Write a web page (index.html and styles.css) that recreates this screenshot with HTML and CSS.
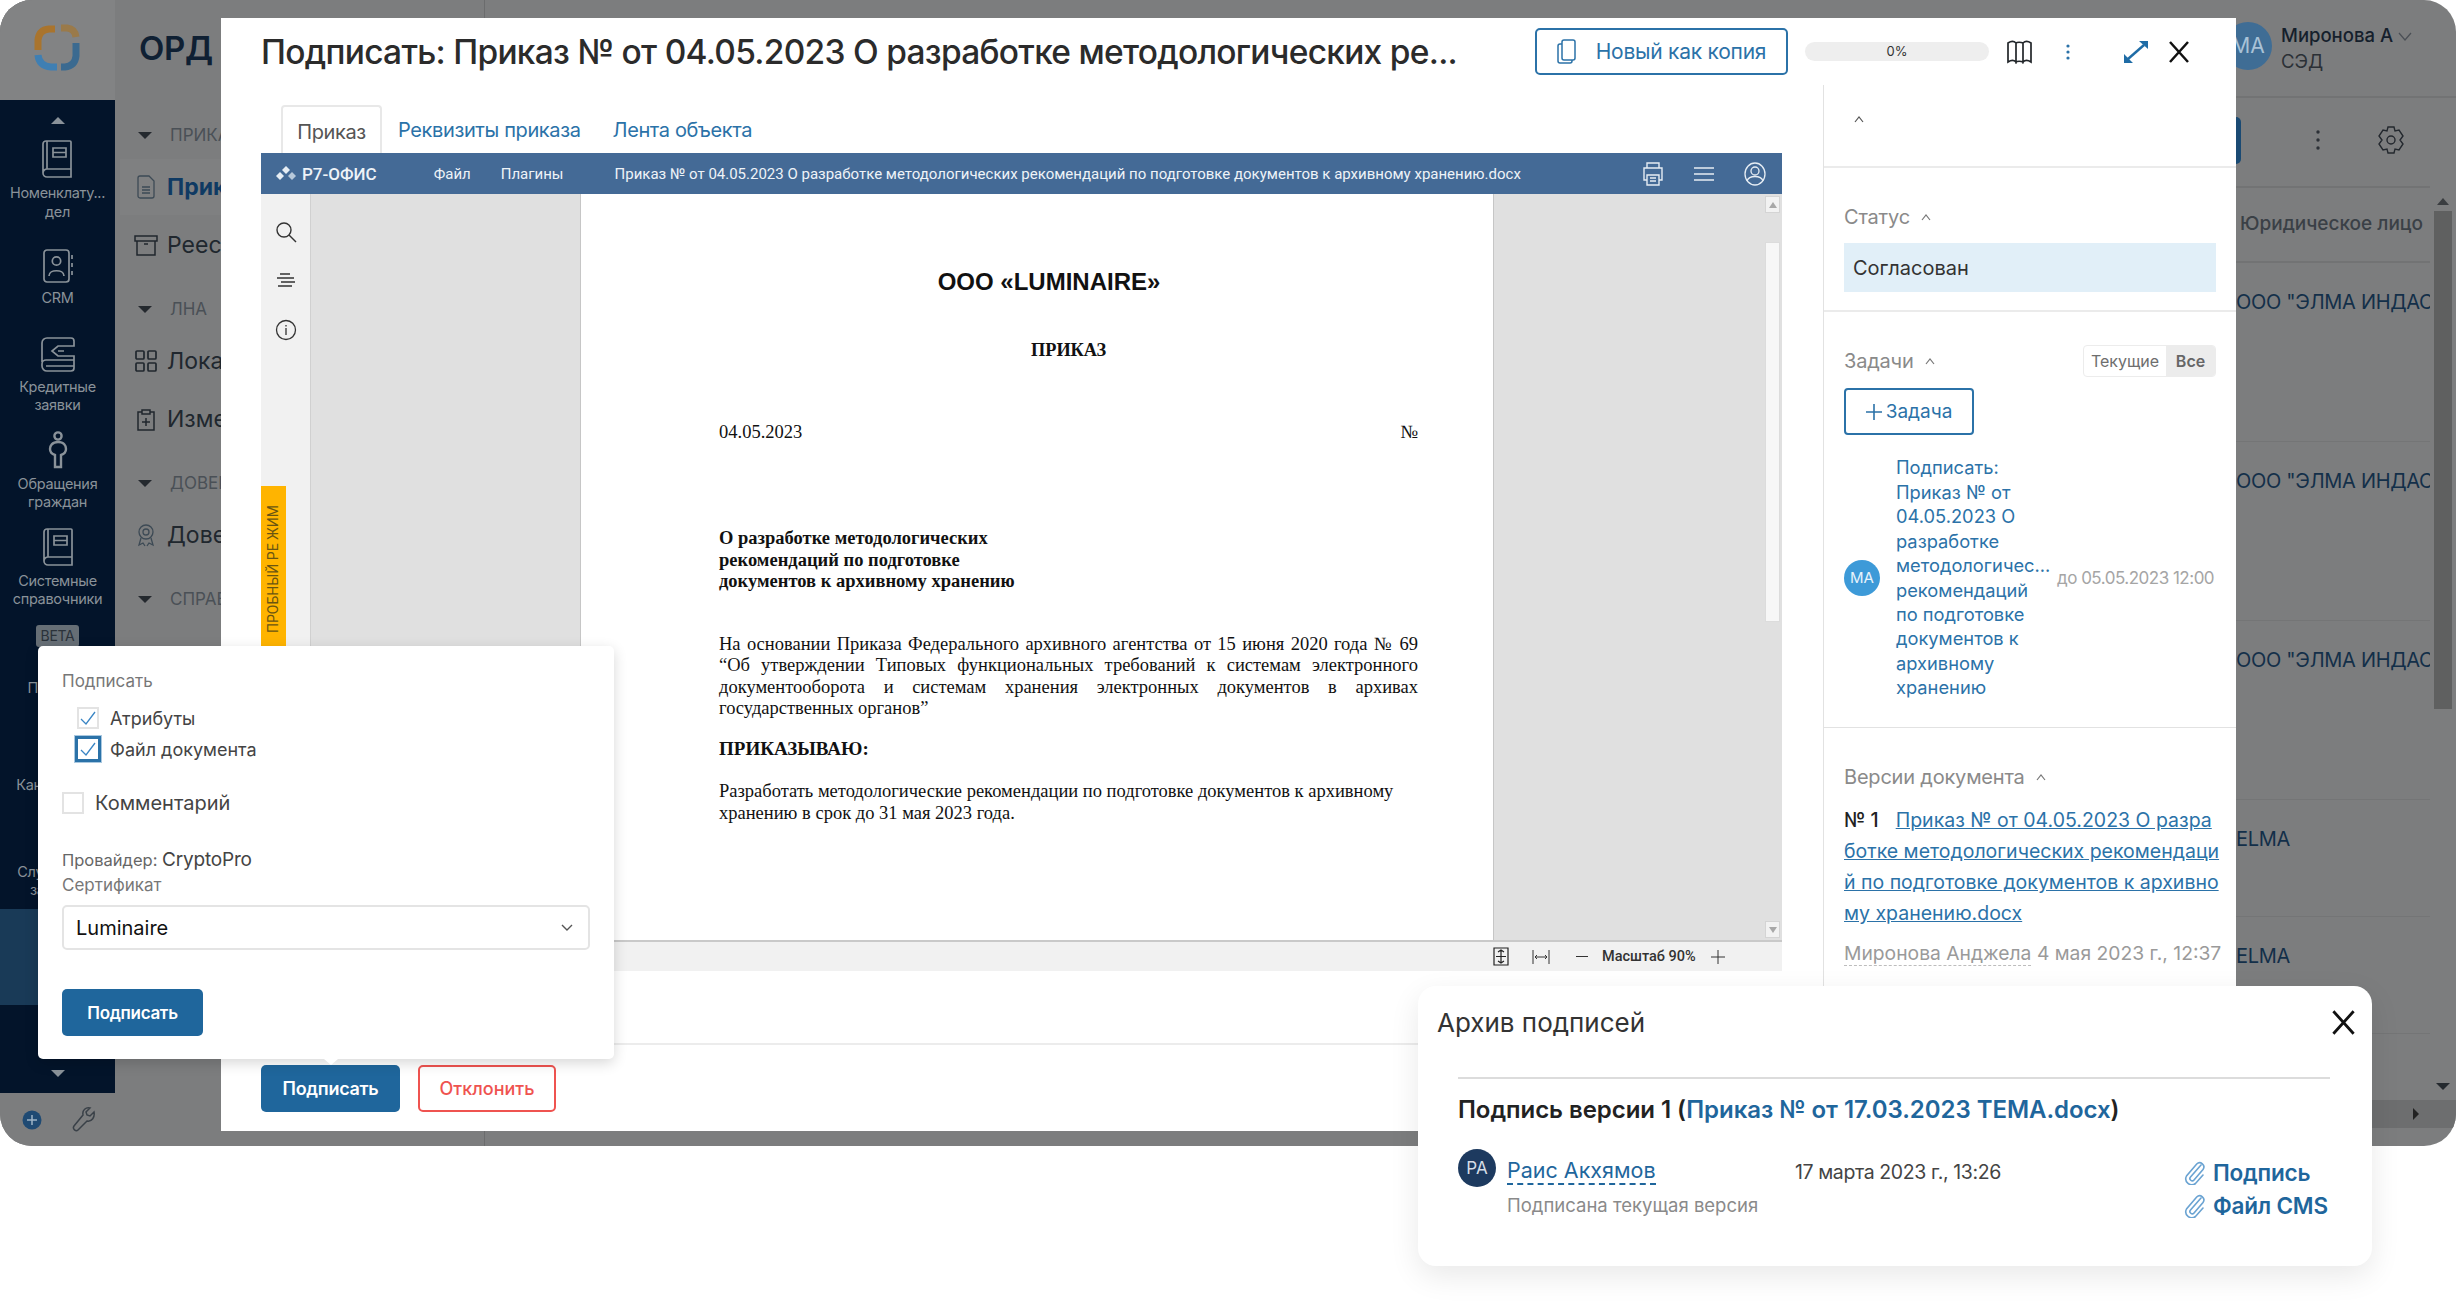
FILE: index.html
```html
<!DOCTYPE html>
<html lang="ru">
<head>
<meta charset="utf-8">
<title>Подписать</title>
<link rel="stylesheet" href="styles.css">
</head>
<body>
<svg class="defs" width="0" height="0">
  <symbol id="book" viewBox="0 0 34 38"><path d="M3 33V4a3 3 0 0 1 3-3h24a1 1 0 0 1 1 1v27H7a4 4 0 0 0-4 4 4 4 0 0 0 4 4h24v-8M7 1v28M13 8h13v9H13zM13 12.500h13" fill="none" stroke="currentColor" stroke-width="1.700"/></symbol>
  <symbol id="clip" viewBox="0 0 22 25"><path d="M18 5 7.500 17a2.300 2.300 0 0 0 3.500 3L20 9.500a4.200 4.200 0 0 0-6.300-5.500L3.500 16a6 6 0 0 0 9 7.500L20 15" fill="none" stroke="#6aa3d2" stroke-width="1.600" stroke-linecap="round"/></symbol>
</svg>
<div class="stage">
  <div class="app">
    <aside class="sidebar">
      <div class="logo-area">
        <svg width="48" height="48" viewBox="0 0 48 48" fill="none" stroke-width="7"><path d="M5 26V16Q6 6 16 5h6" stroke="#a9742d"/><path d="M28 4h6q8 1 9 9" stroke="#9a7a4a"/><path d="M5 31q1 11 13 12h6" stroke="#3f7fb3"/><path d="M43 19v13q-1 10-11 11h-4" stroke="#3b6a90"/></svg>
      </div>
      <nav class="rail">
        <span class="tri tri-up"></span>
        <div class="rail-item rail-first"><svg width="34" height="38"><use href="#book"/></svg><span>Номенклату...<br>дел</span></div>
        <div class="rail-item rail-wide"><svg width="32" height="34" viewBox="0 0 32 34" fill="none" stroke="currentColor" stroke-width="1.700"><rect x="2" y="1" width="25" height="32" rx="3"/><circle cx="14.500" cy="12" r="4.200"/><path d="M7 27c0-7 15-7 15 0M30 6v4M30 14v4M30 22v4"/></svg><span>CRM</span></div>
        <div class="rail-item rail-wide"><svg width="36" height="36" viewBox="0 0 36 36" fill="none" stroke="currentColor" stroke-width="1.700"><path d="M2 26V7a5 5 0 0 1 5-5h24a3 3 0 0 1 3 3v5H18l-6 5 6 5h16v12a3 3 0 0 1-3 3H7a5 5 0 0 1-5-5v-2a4 4 0 0 1 4-4h28M6 30h28M18 15h6"/></svg><span>Кредитные<br>заявки</span></div>
        <div class="rail-item"><svg width="22" height="38" viewBox="0 0 22 38" fill="none" stroke="currentColor" stroke-width="2.400"><circle cx="11" cy="5" r="3.600"/><path d="M11 11c-6 0-8 4-8 7 0 3 2 5 5 6v12h6V24c3-1 5-3 5-6 0-3-2-7-8-7z"/></svg><span>Обращения<br>граждан</span></div>
        <div class="rail-item"><svg width="34" height="38"><use href="#book"/></svg><span>Системные<br>справочники</span></div>
        <span class="beta">BETA</span>
        <span class="rail-label rail-l1">Приказы</span>
        <span class="rail-label rail-l2">Канцелярия</span>
        <span class="rail-label rail-l3">Служебные<br>записки</span>
        <div class="rail-active"></div>
        <span class="tri tri-down"></span>
      </nav>
      <div class="tools">
        <svg width="20" height="20" viewBox="0 0 20 20"><circle cx="10" cy="10" r="9.500" fill="#1f4a73"/><path d="M10 5v10M5 10h10" stroke="#9fb4c6" stroke-width="1.500"/></svg>
        <svg width="24" height="26" viewBox="0 0 24 26" fill="none" stroke="#3a4148" stroke-width="1.500"><path d="M22 5l-4 4-3-1-1-3 4-4c-4-1-8 2-7 7L2 19c-2 3 2 6 4 4l9-9c5 1 8-4 7-9z"/></svg>
      </div>
    </aside>

    <section class="subnav">
      <h1 class="subnav-title">ОРД &amp; ЛНА</h1>
      <div class="nav-head"><span class="tri tri-dark"></span>ПРИКАЗЫ</div>
      <div class="nav-item nav-active"><svg width="20" height="24" viewBox="0 0 20 24" fill="none" stroke="#3d4a55" stroke-width="1.300"><path d="M2 3a2 2 0 0 1 2-2h9l5 5v15a2 2 0 0 1-2 2H4a2 2 0 0 1-2-2zM6 12h8M6 15h8M6 18h8"/></svg>Приказы</div>
      <div class="nav-item"><svg width="24" height="22" viewBox="0 0 24 22" fill="none" stroke="#20272e" stroke-width="1.500"><path d="M1 2h22v5H1zM3 7v14h18V7M10 10h4"/></svg>Реестр</div>
      <div class="nav-head"><span class="tri tri-dark"></span>ЛНА</div>
      <div class="nav-item"><svg width="22" height="22" viewBox="0 0 22 22" fill="none" stroke="#20272e" stroke-width="1.700"><rect x="1" y="1" width="8" height="8" rx="1"/><rect x="13" y="1" width="8" height="8" rx="1"/><rect x="1" y="13" width="8" height="8" rx="1"/><rect x="13" y="13" width="8" height="8" rx="1"/></svg>Локальные</div>
      <div class="nav-item"><svg width="20" height="24" viewBox="0 0 20 24" fill="none" stroke="#20272e" stroke-width="1.500"><path d="M6 5H2v18h16V5h-4M6 3h8v4H6zM10 11v8M6 15h8"/></svg>Изменения</div>
      <div class="nav-head"><span class="tri tri-dark"></span>ДОВЕРЕННОСТИ</div>
      <div class="nav-item"><svg width="20" height="24" viewBox="0 0 20 24" fill="none" stroke="#3d4a55" stroke-width="1.300"><circle cx="10" cy="9" r="7"/><circle cx="10" cy="9" r="3"/><path d="M5 15l-2 7 4-2 2 3M15 15l2 7-4-2-2 3"/></svg>Доверенности</div>
      <div class="nav-head"><span class="tri tri-dark"></span>СПРАВОЧНИКИ</div>
    </section>

    <main class="main">
      <header class="main-top">
        <div class="avatar-big">МА</div>
        <div class="user"><div class="user-name">Миронова А <svg width="14" height="10" viewBox="0 0 14 10" fill="none" stroke="#4a4f55" stroke-width="1.200"><path d="M1 1l6 7 6-7"/></svg></div><div class="user-role">СЭД</div></div>
      </header>
      <div class="toolbar">
        <span class="main-btn"></span>
        <svg class="tb-dots" width="4" height="22" viewBox="0 0 4 22" fill="#2b3036"><circle cx="2" cy="3" r="1.700"/><circle cx="2" cy="11" r="1.700"/><circle cx="2" cy="19" r="1.700"/></svg>
        <svg width="26" height="28" viewBox="0 0 26 28" fill="none" stroke="#23282e" stroke-width="1.400"><path d="M10 1h6l1 4 4-1 4 6-3 4 3 4-4 6-4-1-1 4h-6l-1-4-4 1-4-6 3-4-3-4 4-6 4 1z"/><circle cx="13" cy="14" r="4"/></svg>
      </div>
      <div class="table-wrap">
        <div class="table">
          <div class="row row-head">Юридическое лицо</div>
          <div class="row row-tall">ООО "ЭЛМА ИНДАСТРИ"</div>
          <div class="row row-tall">ООО "ЭЛМА ИНДАСТРИ"</div>
          <div class="row row-tall">ООО "ЭЛМА ИНДАСТРИ"</div>
          <div class="row row-short">ELMA</div>
          <div class="row row-short">ELMA</div>
        </div>
        <div class="vscroll"><span class="tri tri-up tri-dark-up"></span><div class="vthumb"></div><span class="tri tri-dark"></span></div>
      </div>
      <div class="hscroll"><span class="tri-right"></span></div>
    </main>

    <div class="modal">
      <header class="modal-head">
        <h2 class="modal-title">Подписать: Приказ № от 04.05.2023 О разработке методологических ре...</h2>
        <button class="btn-copy"><svg width="23" height="27" viewBox="0 0 23 27" fill="none" stroke="#2b72a8" stroke-width="1.500"><path d="M7 2h9a2 2 0 0 1 2 2v16a2 2 0 0 1-2 2H7a2 2 0 0 1-2-2V4a2 2 0 0 1 2-2z"/><path d="M5 6H3a2 2 0 0 0-2 2v15a2 2 0 0 0 2 2h10a2 2 0 0 0 2-2v-1"/></svg>Новый как копия</button>
        <div class="progress">0%</div>
        <svg class="ico-map" width="27" height="24" viewBox="0 0 27 24" fill="none" stroke="#22262a" stroke-width="1.700"><path d="M2 3c3-2 6-2 8 0v19c-2-2-5-2-8 0zM10 3c1-1 5-1 7 0v19c-2-1-6-1-7 0zM17 3c2-2 5-2 8 0v19c-3-2-6-2-8 0z"/></svg>
        <svg class="ico-dots" width="4" height="16" viewBox="0 0 4 16" fill="#2b72a8"><circle cx="2" cy="2" r="1.600"/><circle cx="2" cy="8" r="1.600"/><circle cx="2" cy="14" r="1.600"/></svg>
        <svg class="ico-exp" width="26" height="24" viewBox="0 0 26 24" fill="none" stroke="#1f6ca6" stroke-width="2.400"><path d="M5 19 21 5"/><path d="M16 1h9v8zM1 14l9 9H1z" fill="#1f6ca6" stroke="none"/></svg>
        <svg class="ico-x" width="24" height="24" viewBox="0 0 24 24" stroke="#111" stroke-width="2.500"><path d="M3 2l18 20M21 2 3 22"/></svg>
      </header>
      <div class="modal-body">
        <div class="modal-left">
          <div class="tabs">
            <span class="tab tab-active">Приказ</span>
            <span class="tab">Реквизиты приказа</span>
            <span class="tab">Лента объекта</span>
          </div>
          <div class="editor">
            <div class="ed-head">
              <svg width="24" height="18" viewBox="0 0 24 18" fill="#e6edf4"><path d="M11 1l4 4-4 4-4-4zM5 7l4 4-4 4-4-4z"/><path d="M17 7l4 4-4 4-4-4z" fill="#b7c8da"/></svg>
              <b class="ed-brand">Р7-ОФИС</b>
              <span class="ed-menu ed-file">Файл</span>
              <span class="ed-menu ed-plug">Плагины</span>
              <span class="ed-name">Приказ № от 04.05.2023 О разработке методологических рекомендаций по подготовке документов к архивному хранению.docx</span>
              <svg class="ed-print" width="22" height="26" viewBox="0 0 22 26" fill="none" stroke="#e6edf4" stroke-width="1.400"><path d="M5 7V2h12v5M5 19H2V7h18v12h-3M5 14h12v10H5zM8 17h6M8 20h6"/></svg>
              <svg class="ed-burger" width="20" height="16" viewBox="0 0 20 16" stroke="#e6edf4" stroke-width="1.500"><path d="M0 2h20M0 8h20M0 14h20"/></svg>
              <svg class="ed-user" width="22" height="24" viewBox="0 0 22 24" fill="none" stroke="#e6edf4" stroke-width="1.300"><ellipse cx="11" cy="12" rx="10" ry="11"/><circle cx="11" cy="9" r="4"/><path d="M3 19c2-6 14-6 16 0"/></svg>
            </div>
            <div class="ed-main">
              <div class="ed-side">
                <svg width="22" height="22" viewBox="0 0 22 22" fill="none" stroke="#333" stroke-width="1.400"><circle cx="9" cy="9" r="7"/><path d="M14 14l7 7"/></svg>
                <svg width="20" height="16" viewBox="0 0 20 16" stroke="#333" stroke-width="1.300"><path d="M4 1h10M1 5h17M5 9h14M2 13h14"/></svg>
                <svg width="22" height="22" viewBox="0 0 22 22" fill="none" stroke="#333" stroke-width="1.300"><circle cx="11" cy="11" r="9.500"/><path d="M11 9v7M11 6v1.500"/></svg>
                <div class="trial"><span>ПРОБНЫЙ РЕ ЖИМ</span></div>
              </div>
              <div class="gutter"></div>
              <article class="page">
                <div class="doc-org">ООО «LUMINAIRE»</div>
                <div class="doc-kind">ПРИКАЗ</div>
                <div class="doc-date"><span>04.05.2023</span><span>№</span></div>
                <div class="doc-subj">О разработке методологических<br>рекомендаций по подготовке<br>документов к архивному хранению</div>
                <div class="doc-par">
                  <div class="just">На основании Приказа Федерального архивного агентства от 15 июня 2020 года № 69</div>
                  <div class="just">“Об утверждении Типовых функциональных требований к системам электронного</div>
                  <div class="just">документооборота и системам хранения электронных документов в архивах</div>
                  <div>государственных органов”</div>
                </div>
                <div class="doc-order">ПРИКАЗЫВАЮ:</div>
                <div class="doc-task">Разработать методологические рекомендации по подготовке документов к архивному<br>хранению в срок до 31 мая 2023 года.</div>
              </article>
              <div class="gutter-r">
                <div class="ed-scroll">
                  <span class="sc-btn"><i class="tri tri-sm-up"></i></span>
                  <div class="sc-thumb"></div>
                  <span class="sc-btn sc-bottom"><i class="tri tri-sm-down"></i></span>
                </div>
              </div>
            </div>
            <div class="ed-status">
              <svg width="16" height="19" viewBox="0 0 16 19" fill="none" stroke="#222" stroke-width="1.200"><path d="M1 1h14v17H1zM8 3v13M5 5l3-2 3 2M5 14l3 2 3-2M3 9.500h10"/></svg>
              <svg class="st-fw" width="18" height="14" viewBox="0 0 18 14" fill="none" stroke="#333"><path d="M1 0v14M17 0v14M3 7h12M5 5 3 7l2 2M13 5l2 2-2 2"/></svg>
              <span class="st-minus"></span>
              <span class="st-zoom">Масштаб 90%</span>
              <svg width="14" height="14" viewBox="0 0 14 14" stroke="#333"><path d="M7 0v14M0 7h14"/></svg>
            </div>
          </div>
        </div>
        <aside class="panel">
          <section class="p-sec p-top"><svg class="chev" width="10" height="7" viewBox="0 0 10 7" fill="none" stroke="#555" stroke-width="1.200"><path d="M1 6l4-5 4 5"/></svg></section>
          <section class="p-sec p-status">
            <div class="p-title">Статус <svg class="chev" width="10" height="7" viewBox="0 0 10 7" fill="none" stroke="#777" stroke-width="1.200"><path d="M1 6l4-5 4 5"/></svg></div>
            <div class="status-box">Согласован</div>
          </section>
          <section class="p-sec p-tasks">
            <div class="p-row">
              <div class="p-title">Задачи <svg class="chev" width="10" height="7" viewBox="0 0 10 7" fill="none" stroke="#777" stroke-width="1.200"><path d="M1 6l4-5 4 5"/></svg></div>
              <div class="toggle"><span class="tg-item">Текущие</span><span class="tg-item tg-on">Все</span></div>
            </div>
            <button class="btn-task"><svg width="16" height="16" viewBox="0 0 16 16" stroke="#2b72a8" stroke-width="1.600"><path d="M8 0v16M0 8h16"/></svg>Задача</button>
            <div class="task">
              <span class="task-av">МА</span>
              <div class="task-text">Подписать:<br>Приказ № от<br>04.05.2023 О<br>разработке<br>методологичес...<br>рекомендаций<br>по подготовке<br>документов к<br>архивному<br>хранению</div>
              <span class="task-date">до 05.05.2023 12:00</span>
            </div>
          </section>
          <section class="p-sec p-vers">
            <div class="p-title">Версии документа <svg class="chev" width="10" height="7" viewBox="0 0 10 7" fill="none" stroke="#777" stroke-width="1.200"><path d="M1 6l4-5 4 5"/></svg></div>
            <div class="ver"><b class="ver-no">№ 1</b><a class="ver-link">Приказ № от 04.05.2023 О разра<br>ботке методологических рекомендаци<br>й по подготовке документов к архивно<br>му хранению.docx</a></div>
            <div class="ver-meta"><span class="dash">Миронова Анджела</span> 4 мая 2023 г., 12:37</div>
          </section>
        </aside>
      </div>
      <footer class="modal-foot">
        <button class="btn-primary">Подписать</button>
        <button class="btn-danger">Отклонить</button>
      </footer>
    </div>
  </div>

  <div class="popup">
    <div class="pop-label">Подписать</div>
    <label class="chk chk-sub chk-first"><span class="box"><svg width="16" height="14" viewBox="0 0 16 14" fill="none" stroke="#3a85c4" stroke-width="1.300"><path d="M1 8l5 5 9-12"/></svg></span>Атрибуты</label>
    <label class="chk chk-sub chk-focus"><span class="box box-focus"><svg width="16" height="14" viewBox="0 0 16 14" fill="none" stroke="#3a85c4" stroke-width="1.300"><path d="M1 8l5 5 9-12"/></svg></span>Файл документа</label>
    <label class="chk chk-main"><span class="box"></span>Комментарий</label>
    <div class="pop-prov">Провайдер: <span>CryptoPro</span></div>
    <div class="pop-label pop-cert">Сертификат</div>
    <div class="select">Luminaire<svg width="12" height="8" viewBox="0 0 12 8" fill="none" stroke="#555" stroke-width="1.400"><path d="M1 1l5 5 5-5"/></svg></div>
    <button class="btn-primary btn-pop">Подписать</button>
  </div>

  <div class="card">
    <header class="card-head">
      <h3 class="card-title">Архив подписей</h3>
      <svg width="27" height="27" viewBox="0 0 24 24" stroke="#111" stroke-width="2.500"><path d="M3 2l18 20M21 2 3 22"/></svg>
    </header>
    <div class="card-body">
      <div class="card-sub">Подпись версии 1 (<a>Приказ № от 17.03.2023 ТЕМА.docx</a>)</div>
      <div class="sig">
        <span class="sig-av">РА</span>
        <div class="sig-who"><a class="sig-name">Раис Акхямов</a><div class="sig-note">Подписана текущая версия</div></div>
        <div class="sig-date">17 марта 2023 г., 13:26</div>
        <div class="sig-files">
          <a class="sig-file"><svg width="22" height="25"><use href="#clip"/></svg>Подпись</a>
          <a class="sig-file"><svg width="22" height="25"><use href="#clip"/></svg>Файл CMS</a>
        </div>
      </div>
    </div>
  </div>
</div>
</body>
</html>
```

FILE: styles.css
```css
* { box-sizing: border-box; }
html, body { margin: 0; height: 100%; background: #fff; }
body { font-family: Inter, "Noto Sans", sans-serif; color: #222; overflow: hidden; }
button { font-family: inherit; cursor: pointer; }
h1, h2, h3 { margin: 0; font-weight: 500; }
.defs { position: absolute; }

.stage { position: relative; width: 2456px; height: 1313px; overflow: hidden; }
.app { position: relative; display: flex; height: 1146px; border-radius: 32px; overflow: hidden; background: #7c7d7e; }

/* triangles */
.tri { display: block; width: 0; height: 0; border-left: 7px solid transparent; border-right: 7px solid transparent; }
.tri-up { border-bottom: 7px solid #8a9299; }
.tri-down { border-top: 7px solid #8a9299; }
.tri-dark { border-top: 7px solid #24292e; }
.tri-dark-up { border-bottom-color: #3a3d40; border-left-width: 6px; border-right-width: 6px; }

/* left rail */
.sidebar { flex: 0 0 115px; display: flex; flex-direction: column; background: #7c7d7e; }
.logo-area { height: 100px; padding: 24px 0 0 33px; background: #828384; }
.rail { height: 993px; background: #03142a; display: flex; flex-direction: column; align-items: center; padding-top: 17px; color: #8a9299; font-size: 14.500px; line-height: 18.500px; letter-spacing: -.3px; text-align: center; }
.rail-item { display: flex; flex-direction: column; align-items: center; gap: 6px; margin-top: 16px; }
.rail-item span { display: block; white-space: nowrap; }
.rail-first { margin-top: 16px; }
.rail-wide { margin-top: 28px; }
.beta { margin-top: 16px; padding: 0 5px; height: 22px; line-height: 22px; font-size: 14px; background: #666e75; color: #2b323a; border-radius: 3px; }
.rail-label { white-space: nowrap; }
.rail-l1 { margin-top: 32px; }
.rail-l2 { margin-top: 79px; }
.rail-l3 { margin-top: 68px; }
.rail-active { align-self: stretch; height: 96px; margin-top: 9px; background: #193a57; }
.rail .tri-down { margin-top: auto; margin-bottom: 16px; }
.tools { flex: 1; display: flex; align-items: center; gap: 30px; padding-left: 22px; }

/* second column */
.subnav { flex: 0 0 370px; padding-left: 5px; border-right: 1px solid #6b6c6d; color: #1c2733; white-space: nowrap; overflow: hidden; }
.subnav-title { height: 113px; padding-left: 19px; font-size: 33px; line-height: 96px; font-weight: 600; color: #0f2033; letter-spacing: -.3px; }
.nav-head { display: flex; align-items: center; gap: 18px; height: 44px; margin-top: 14px; padding-left: 18px; font-size: 17px; color: #4a5056; }
.subnav-title + .nav-head { margin-top: 0; }
.nav-item { display: flex; align-items: center; gap: 9px; height: 56px; margin-top: 2px; padding-left: 14px; font-size: 23px; color: #20272e; }
.nav-item svg { width: 24px; }
.nav-active { background: #7f8081; color: #0f3a63; font-weight: 700; }

/* page behind */
.main { flex: 1; display: flex; flex-direction: column; min-width: 0; }
.main-top { display: flex; justify-content: flex-end; align-items: center; height: 98px; border-bottom: 2px solid #727374; }
.avatar-big { width: 48px; height: 48px; margin: 0 9px 5px 0; border-radius: 50%; background: #3f6d95; color: #a9c2d7; font-size: 21px; line-height: 48px; text-align: center; }
.user { width: 175px; color: #15202c; font-size: 18.500px; line-height: 26px; }
.user-name { font-weight: 500; }
.user-role { color: #2b3036; }
.toolbar { display: flex; align-items: center; justify-content: flex-end; height: 88px; padding: 0 52px 4px 0; }
.main-btn { width: 60px; height: 47px; margin-right: 75px; border-radius: 5px; background: #1a4a73; }
.tb-dots { margin-right: 58px; }
.table-wrap { display: flex; height: 914px; }
.table { flex: 1; min-width: 0; padding-left: 1751px; border-top: 2px solid #727374; }
.row { height: 179px; padding: 25px 0 0 3px; margin-left: -3px; color: #132f49; font-size: 20px; letter-spacing: -.3px; line-height: 28px; white-space: nowrap; overflow: hidden; border-bottom: 1px solid #747576; }
.row-head { height: 75px; padding: 0 0 0 7px; color: #3a4046; font-size: 19px; letter-spacing: 0; line-height: 72px; font-weight: 500; border-bottom: 2px solid #727374; }
.row-short { height: 117px; }
.vscroll { flex: 0 0 26px; position: relative; display: flex; flex-direction: column; align-items: center; padding-top: 12px; background: #7c7d7e; }
.vthumb { flex: 0 0 498px; align-self: stretch; margin: 6px 4px 0; background: #5f6060; }
.vscroll .tri-dark { margin-top: auto; margin-bottom: 10px; }
.hscroll { display: flex; justify-content: flex-end; align-items: center; height: 28px; padding-right: 37px; background: #6d6e6f; }
.tri-right { width: 0; height: 0; border-top: 6px solid transparent; border-bottom: 6px solid transparent; border-left: 6px solid #222; }

/* modal */
.modal { position: absolute; left: 221px; top: 18px; width: 2015px; height: 1113px; display: flex; flex-direction: column; background: #fff; }
.modal-head { display: flex; align-items: center; height: 67px; padding-left: 40px; flex: none; }
.modal-title { width: 1274px; font-size: 33.500px; font-weight: 500; color: #2b2b2b; white-space: nowrap; letter-spacing: -.72px; }
.btn-copy { display: flex; align-items: center; justify-content: center; gap: 16px; width: 253px; height: 47px; background: #fff; border: 2px solid #2b72a8; border-radius: 5px; color: #2b72a8; font-size: 21px; letter-spacing: -.25px; }
.progress { width: 184px; height: 19px; margin-left: 17px; border-radius: 10px; background: #eeeeee; text-align: center; font-size: 13px; line-height: 19px; color: #333; }
.ico-map { margin-left: 17px; }
.ico-dots { margin-left: 33px; }
.ico-exp { margin-left: 53px; }
.ico-x { margin-left: 18px; }

.modal-body { display: flex; height: 958px; flex: none; }
.modal-left { width: 1602px; flex: none; padding: 0 41px 0 40px; }
.tabs { display: flex; align-items: flex-end; height: 68px; padding-left: 20px; }
.tab { height: 48px; padding: 0 16px; line-height: 50px; font-size: 20px; letter-spacing: -.38px; color: #2b72a8; white-space: nowrap; }
.tab-active { width: 101px; padding: 0; text-align: center; color: #555; border: 2px solid #e8e8e8; border-bottom: 0; border-radius: 4px 4px 0 0; }
.editor { display: flex; flex-direction: column; height: 818px; }
.ed-head { display: flex; align-items: center; height: 41px; padding-left: 14px; background: #446a96; color: #eef3f8; font-family: Roboto, sans-serif; font-size: 15px; white-space: nowrap; }
.ed-brand { margin-left: 3px; font-size: 17px; font-weight: 500; }
.ed-file { margin-left: 57px; }
.ed-plug { margin-left: 30px; }
.ed-name { margin-left: 51px; width: 1010px; }
.ed-print { margin-left: 17px; }
.ed-burger { margin-left: 30px; }
.ed-user { margin-left: 30px; }
.ed-main { display: flex; height: 746px; }
.ed-side { position: relative; flex: 0 0 50px; display: flex; flex-direction: column; align-items: center; gap: 30px; padding-top: 27px; background: #f1f1f1; border-right: 1px solid #d0d0d0; }
.trial { position: absolute; left: 0; top: 292px; width: 25px; height: 170px; background: #ffb400; }
.trial span { position: absolute; left: 2px; top: 17px; writing-mode: vertical-rl; transform: rotate(180deg); height: 130px; font-size: 14px; line-height: 20px; color: #6a5512; font-family: Roboto, sans-serif; white-space: nowrap; }
.gutter { flex: 0 0 269px; background: #e0e0e0; }
.gutter-r { flex: 1; display: flex; justify-content: flex-end; padding-right: 2px; background: #e0e0e0; }
.page { flex: 0 0 914px; padding: 74px 75px 0 138px; background: #fff; border-left: 1px solid #c6c6c6; border-right: 1px solid #c6c6c6; font-family: "Liberation Serif", serif; font-size: 18.500px; line-height: 21.500px; color: #111; }
.doc-org { margin-left: 180px; width: 300px; font-family: "Liberation Sans", sans-serif; font-weight: 700; font-size: 24px; line-height: 28px; text-align: center; }
.doc-kind { margin-top: 44px; margin-left: 312px; font-weight: 700; font-size: 18.300px; }
.doc-date { display: flex; justify-content: space-between; margin-top: 60px; }
.doc-subj { margin-top: 85px; font-weight: 700; }
.doc-par { margin-top: 41px; }
.just { text-align: justify; text-align-last: justify; }
.doc-order { margin-top: 18px; font-weight: 700; font-size: 19px; }
.doc-task { margin-top: 22px; white-space: nowrap; }
.ed-scroll { position: relative; width: 15px; display: flex; flex-direction: column; }
.sc-btn { display: flex; align-items: center; justify-content: center; height: 17px; margin-top: 2px; background: #f2f2f2; border: 1px solid #d4d4d4; }
.sc-thumb { height: 380px; margin-top: 29px; background: #f7f7f7; border: 1px solid #dcdcdc; }
.sc-bottom { margin-top: auto; margin-bottom: 2px; }
.tri-sm-up { border-left-width: 4px; border-right-width: 4px; border-bottom: 6px solid #a8a8a8; }
.tri-sm-down { border-left-width: 4px; border-right-width: 4px; border-top: 6px solid #a8a8a8; }
.ed-status { display: flex; align-items: center; height: 31px; padding-left: 1232px; background: #f1f1f1; border-top: 2px solid #c9c9c9; }
.st-fw { margin-left: 23px; }
.st-minus { width: 12px; height: 1px; margin-left: 26px; background: #333; }
.st-zoom { margin: 0 15px 0 14px; font-size: 14.500px; font-weight: 500; color: #333; font-family: Roboto, sans-serif; white-space: nowrap; }

/* right panel */
.panel { flex: 1; border-left: 1px solid #e2e2e2; overflow: hidden; }
.p-sec { padding: 0 20px 0 20px; border-bottom: 2px solid #ebebeb; }
.chev { margin-left: 6px; vertical-align: 3px; }
.p-top { height: 83px; padding: 31px 0 0 30px; }
.p-top .chev { margin: 0; display: block; }
.p-status { height: 144px; padding-top: 34px; }
.p-title { font-size: 20px; line-height: 30px; color: #8a8a8a; white-space: nowrap; letter-spacing: -.2px; }
.status-box { height: 49px; margin-top: 11px; padding-left: 9px; background: #e1eff8; font-size: 20px; line-height: 51px; color: #333; }
.p-tasks { height: 416px; padding-top: 33px; border-bottom-width: 1px; border-bottom-color: #e2e2e2; }
.p-row { display: flex; justify-content: space-between; align-items: center; height: 32px; }
.toggle { display: flex; width: 133px; height: 32px; border: 1px solid #ececec; border-radius: 4px; font-size: 16px; line-height: 30px; text-align: center; color: #6e6e6e; overflow: hidden; }
.tg-item { flex: 1; }
.tg-on { flex: 0 0 49px; background: #ececec; font-weight: 600; color: #666; }
.btn-task { display: flex; align-items: center; justify-content: center; gap: 4px; width: 130px; height: 47px; margin-top: 11px; background: #fff; border: 2px solid #2b72a8; border-radius: 4px; font-size: 19px; color: #2b72a8; }
.task { display: flex; align-items: center; height: 243px; margin-top: 21px; }
.task-av { flex: 0 0 36px; height: 36px; border-radius: 50%; background: #3d9ad8; color: #e8f3fb; font-size: 15px; line-height: 36px; text-align: center; }
.task-text { flex: 0 0 161px; margin-left: 16px; font-size: 18.300px; line-height: 24.400px; color: #2b72a8; white-space: nowrap; }
.task-date { font-size: 17px; color: #a5a5a5; white-space: nowrap; letter-spacing: -.5px; }
.p-vers { padding-top: 34px; border: 0; }
.ver { position: relative; margin-top: 13px; font-size: 19.500px; line-height: 31px; white-space: nowrap; }
.ver-no { font-weight: 500; margin-right: 17px; color: #222; }
.ver-link { color: #2b72a8; text-decoration: underline; }
.ver-meta { margin-top: 9px; font-size: 19.300px; line-height: 30px; color: #9a9a9a; white-space: nowrap; }
.dash { border-bottom: 1px dashed #bdbdbd; }

.modal-foot { display: flex; gap: 18px; flex: 1; padding: 20px 0 0 40px; border-top: 2px solid #ececec; }
.btn-primary { width: 139px; height: 47px; background: #1f669c; border: 0; border-radius: 5px; color: #fff; font-size: 18px; font-weight: 600; letter-spacing: -.3px; }
.btn-danger { width: 138px; height: 47px; background: #fff; border: 2px solid #ef5350; border-radius: 5px; color: #ef5350; font-size: 18px; font-weight: 500; }

/* sign popup */
.popup { position: absolute; left: 38px; top: 646px; width: 576px; height: 413px; padding: 23px 24px 0; background: #fff; border-radius: 5px; box-shadow: 0 4px 14px rgba(0,0,0,.16); color: #444; }
.popup::after { content: ""; position: absolute; left: 286px; bottom: -6px; border-left: 7px solid transparent; border-right: 7px solid transparent; border-top: 6px solid #fff; }
.pop-label { font-size: 17px; line-height: 24px; color: #777; }
.chk { display: flex; align-items: center; white-space: nowrap; }
.box { display: flex; align-items: center; justify-content: center; width: 22px; height: 22px; background: #fff; border: 2px solid #e3e3e3; }
.chk-sub { height: 26px; margin-left: 15px; gap: 11px; font-size: 18px; color: #444; }
.chk-first { margin-top: 12px; }
.chk-focus { margin-top: 5px; }
.box-focus { margin: 0 -2px; width: 26px; height: 26px; border: 3px solid #2b72a8; box-shadow: 0 0 0 1px #a9c8e0; }
.chk-main { height: 26px; margin-top: 28px; gap: 11px; font-size: 20px; color: #444; }
.pop-prov { margin-top: 31px; font-size: 16.500px; line-height: 26px; color: #666; white-space: nowrap; }
.pop-prov span { font-size: 19px; color: #444; letter-spacing: -.2px; }
.pop-cert { margin-top: 0; }
.select { display: flex; align-items: center; justify-content: space-between; height: 45px; margin-top: 8px; padding: 0 15px 0 12px; border: 2px solid #e4e4e4; border-radius: 5px; font-size: 20px; color: #111; }
.btn-pop { display: block; margin-top: 39px; width: 141px; font-size: 17px; }

/* archive card */
.card { position: absolute; left: 1418px; top: 986px; width: 954px; height: 280px; background: #fff; border-radius: 18px; box-shadow: 0 10px 30px rgba(0,0,0,.09); }
.card-head { display: flex; justify-content: space-between; align-items: center; height: 72px; padding: 0 15px 0 19px; }
.card-title { font-size: 26px; font-weight: 400; color: #333; }
.card-body { margin: 19px 42px 0 40px; border-top: 2px solid #dcdcdc; }
.card-sub { margin-top: 16px; font-size: 24px; line-height: 30px; font-weight: 600; color: #222; white-space: nowrap; letter-spacing: -.05px; }
.card-sub a { color: #1f669c; }
.sig { display: flex; margin-top: 24px; }
.sig-av { flex: 0 0 38px; height: 38px; border-radius: 50%; background: #1d3a5f; color: #d5dde6; font-size: 17px; line-height: 38px; text-align: center; }
.sig-who { flex: 0 0 288px; margin-left: 11px; padding-top: 9px; }
.sig-name { display: inline-block; font-size: 21.500px; line-height: 25px; color: #1f669c; border-bottom: 2px dashed #1f669c; }
.sig-note { margin-top: 8px; font-size: 18.500px; line-height: 24px; color: #8a8a8a; white-space: nowrap; }
.sig-date { flex: 1; padding-top: 10px; font-size: 19.500px; letter-spacing: -.4px; line-height: 26px; color: #444; white-space: nowrap; }
.sig-files { flex: 0 0 147px; padding-top: 7px; }
.sig-file { display: flex; align-items: center; gap: 8px; height: 33px; font-size: 22.500px; font-weight: 600; letter-spacing: -.2px; color: #1f669c; white-space: nowrap; }
```
